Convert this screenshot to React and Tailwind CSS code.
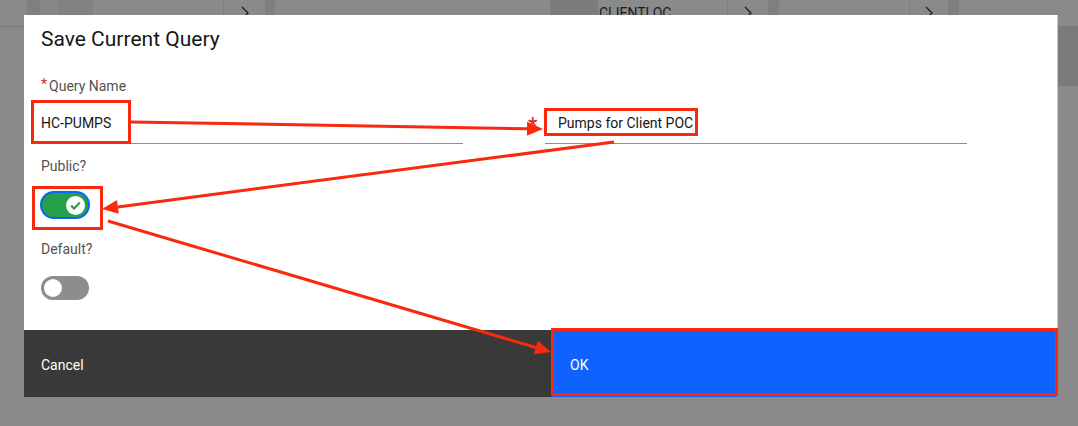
import React from 'react';

const RED = '#f8290d';

const headerCells = [
  { w: 'w-[27px]', bg: 'bg-[#8a8a8a]' },
  { w: 'w-[13px]', bg: 'bg-[#7f7f7f]' },
  { w: 'w-[18px]', bg: 'bg-[#878787]' },
  { w: 'w-[35px]', bg: 'bg-[#828282]' },
  { w: 'w-[130px]', bg: 'bg-[#8a8a8a]' },
  { w: 'w-[42px]', bg: 'bg-[#8a8a8a]', chevron: true, border: true },
  { w: 'w-[10px]', bg: 'bg-[#7f7f7f]' },
  { w: 'w-[275px]', bg: 'bg-[#8a8a8a]' },
  { w: 'w-[48px]', bg: 'bg-[#7c7c7c]' },
  { w: 'w-[129px]', bg: 'bg-[#8a8a8a]', label: 'CLIENTLOC' },
  { w: 'w-[41px]', bg: 'bg-[#8a8a8a]', chevron: true, border: true },
  { w: 'w-[11px]', bg: 'bg-[#7f7f7f]' },
  { w: 'w-[130px]', bg: 'bg-[#8a8a8a]' },
  { w: 'w-[39px]', bg: 'bg-[#8a8a8a]', chevron: true, border: true },
  { w: 'w-[11px]', bg: 'bg-[#7f7f7f]' },
  { w: 'flex-1', bg: 'bg-[#8a8a8a]' },
];

const Chevron = () => (
  <svg width="10" height="14" viewBox="0 0 10 14" fill="none">
    <path d="M2 1l6 6-6 6" stroke="#222" strokeWidth="1.4" />
  </svg>
);

const Toggle = ({ on }) =>
  on ? (
    <div className="w-[50px] h-[28px] rounded-full bg-[#0f62fe] p-[2px]">
      <div className="h-full rounded-full bg-[#24a148] flex items-center justify-end pr-[3px]">
        <div className="w-[19px] h-[19px] rounded-full bg-white flex items-center justify-center">
          <svg width="11" height="9" viewBox="0 0 11 9" fill="none">
            <path d="M1.2 4.6l2.9 2.9L9.8 1.5" stroke="#24a148" strokeWidth="2.2" />
          </svg>
        </div>
      </div>
    </div>
  ) : (
    <div className="w-[48px] h-[24px] rounded-full bg-[#8d8d8d] flex items-center pl-[3px]">
      <div className="w-[18px] h-[18px] rounded-full bg-white" />
    </div>
  );

const Arrow = ({ x1, y1, tip, base, p1, p2 }) => (
  <g>
    <line x1={x1} y1={y1} x2={base[0]} y2={base[1]} stroke={RED} strokeWidth="3" />
    <polygon points={`${tip[0]},${tip[1]} ${p1[0]},${p1[1]} ${p2[0]},${p2[1]}`} fill={RED} />
  </g>
);

export default function App() {
  return (
    <div
      className="relative w-[1078px] h-[426px] bg-[#8a8a8a] overflow-hidden"
      style={{ fontFamily: 'Roboto, "Liberation Sans", sans-serif' }}
    >
      {/* page behind the overlay */}
      <div className="flex h-[27px] border-b border-[#7a7a7a]">
        {headerCells.map((c, i) => (
          <div
            key={i}
            className={`${c.w} ${c.bg} h-full flex items-center ${c.chevron ? 'justify-center' : ''} ${c.border ? 'border-l border-[#808080]' : ''}`}
          >
            {c.chevron && <Chevron />}
            {c.label && <span className="text-[14px] text-[#1c1c1c] pl-[1px]">{c.label}</span>}
          </div>
        ))}
      </div>
      <div className="flex justify-end">
        <div className="w-[20px] h-[59px] bg-[#7b7b7b]" />
      </div>

      {/* modal */}
      <div className="absolute left-[24px] top-[15px] w-[1034px] bg-white border-r border-[#c6c6c6] flex flex-col">
        <div className="h-[315px] pl-[17px] pt-[10px]">
          <h2 className="text-[21px] leading-[28px] text-[#161616]">Save Current Query</h2>

          <div className="grid grid-cols-[422px_422px] gap-x-[82px] mt-[24px] items-end">
            <div>
              <div className="text-[14px] leading-[18px] text-[#525252] flex">
                <span className="text-[#da1e28] text-[14px] leading-[14px] mr-[2px]">*</span>
                Query Name
              </div>
              <div className="mt-[9px] h-[40px] flex items-center border-b border-[#8d8d8d] text-[14px] text-[#161616]">
                HC-PUMPS
              </div>
            </div>
            <div className="relative">
              <span className="absolute left-[-17px] top-[11px] text-[#da1e28] text-[22px] leading-[22px]">*</span>
              <div className="h-[40px] flex items-center pl-[13px] border-b border-[#8d8d8d] text-[14px] text-[#161616]">
                Pumps for Client POC
              </div>
            </div>
          </div>

          <div className="mt-[13px] text-[14px] leading-[18px] text-[#525252]">Public?</div>
          <div className="mt-[16px] ml-[-1px]">
            <Toggle on />
          </div>
          <div className="mt-[21px] text-[14px] leading-[18px] text-[#525252]">Default?</div>
          <div className="mt-[18px]">
            <Toggle />
          </div>
        </div>

        <div className="flex h-[67px] text-[14px] text-white">
          <div className="w-[528px] bg-[#393939] flex items-center pl-[17px] pt-[3px]">Cancel</div>
          <div className="flex-1 bg-[#0f62fe] flex items-center pl-[18px] pt-[3px]">OK</div>
        </div>
      </div>

      {/* annotations */}
      <svg className="absolute inset-0 pointer-events-none" width="1078" height="426" viewBox="0 0 1078 426">
        <g fill="none" stroke={RED} strokeWidth="3">
          <rect x="32.5" y="101.5" width="97" height="41" />
          <rect x="545.5" y="109.5" width="151" height="25" />
          <rect x="33.5" y="187.5" width="68" height="41" />
          <rect x="552.5" y="329.5" width="504" height="65" />
        </g>
        <Arrow x1={131} y1={122} tip={[543, 129]} base={[527, 128.7]} p1={[526.9, 135.7]} p2={[527.1, 121.7]} />
        <Arrow x1={614} y1={142} tip={[102, 209]} base={[117.9, 206.9]} p1={[118.8, 213.8]} p2={[117, 199.9]} />
        <Arrow x1={108} y1={221} tip={[551, 352]} base={[535.7, 347.5]} p1={[533.7, 354.2]} p2={[537.7, 340.8]} />
      </svg>
    </div>
  );
}
